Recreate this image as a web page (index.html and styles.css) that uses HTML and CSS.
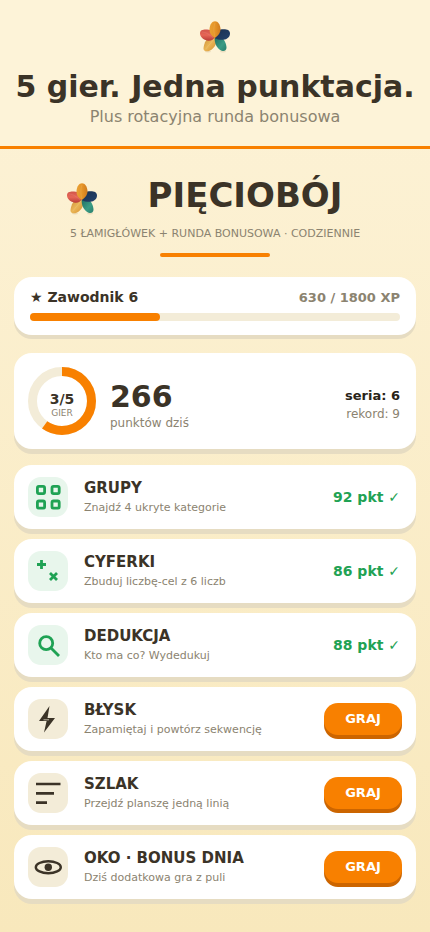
FILE: index.html
```html
<!DOCTYPE html>
<html lang="pl">
<head>
<meta charset="utf-8">
<meta name="viewport" content="width=device-width, initial-scale=1">
<title>Pięciobój</title>
<link rel="stylesheet" href="styles.css">
</head>
<body>
<svg class="defs" aria-hidden="true">
  <defs>
    <linearGradient id="amber" x1="0" x2="1"><stop offset="0" stop-color="#e8a034"/><stop offset=".5" stop-color="#e69528"/><stop offset="1" stop-color="#cf7a1e"/></linearGradient>
    <linearGradient id="navy" x1="0" y1="0" x2="1" y2="1"><stop offset="0" stop-color="#1b3050"/><stop offset="1" stop-color="#23426c"/></linearGradient>
    <linearGradient id="teal" x1="0" y1="0" x2="1" y2="1"><stop offset="0" stop-color="#1f6c62"/><stop offset=".6" stop-color="#3b9c85"/><stop offset="1" stop-color="#287e6c"/></linearGradient>
    <linearGradient id="gold" x1="0" y1="0" x2="1" y2="1"><stop offset="0" stop-color="#c78832"/><stop offset=".5" stop-color="#eab657"/><stop offset="1" stop-color="#d58d2e"/></linearGradient>
    <linearGradient id="coral" x1="0" y1="0" x2="0" y2="1"><stop offset="0" stop-color="#d2554a"/><stop offset=".5" stop-color="#e66656"/><stop offset="1" stop-color="#b93d37"/></linearGradient>
    <symbol id="logo" viewBox="0 0 32 32">
      <ellipse cx="9" cy="30.500" rx="3" ry="1" fill="#8b6b3a" opacity=".15"/>
      <ellipse cx="24" cy="30.500" rx="3" ry="1" fill="#8b6b3a" opacity=".15"/>
      <path d="M16.500 15L8 18.500C6 20 4.500 25 4.500 28C5 30.500 8 31 11 29.500C15 27.500 18 23 17.500 18Z" fill="url(#gold)"/>
      <path d="M16 15.500L23 17C26 19 27.500 24 27.500 27C27 30.500 24 31 20.500 28.500C16.500 25.500 15 20 16 15.500Z" fill="url(#teal)"/>
      <path d="M15.500 17C15.500 11.500 18.500 8.500 23 8.300C27 8 31 8.500 31 12.500C31 16 28 18.500 24.500 18.800C21 19 18 18.500 15.500 17Z" fill="url(#navy)"/>
      <path d="M16 16C14.500 19 11.500 20.300 8 19.500C4 18.500 1 15.500 1 12.500C1 9 4 8.300 8 8.500C13 8.500 16 11.500 16 16Z" fill="url(#coral)"/>
      <path d="M15.800 17C12 15 10.300 12 10.500 8C10.800 3.500 13 .2 16 .2C19 .2 21.200 3.500 21.500 8C21.500 12 19.500 14 15.800 17Z" fill="url(#amber)"/>
      <path d="M16 2C14 8 15 12 16 16M7 28C9 25 12 22 15 18M3 11C7 11 11 14 14 17" fill="none" stroke="#fff" stroke-width=".6" opacity=".15"/>
    </symbol>
  </defs>
</svg>
<header class="banner">
  <svg class="logo" aria-hidden="true"><use href="#logo"/></svg>
  <p class="slogan">5 gier. Jedna punktacja.</p>
  <p class="tagline">Plus rotacyjna runda bonusowa</p>
</header>
<main class="page">
  <div class="brand">
    <svg class="logo" aria-hidden="true"><use href="#logo"/></svg>
    <h1 class="name">PIĘCIOBÓJ</h1>
  </div>
  <p class="intro">5 ŁAMIGŁÓWEK + RUNDA BONUSOWA · CODZIENNIE</p>
  <div class="rule"></div>

  <section class="card level">
    <div class="level-row">
      <span class="rank">★ Zawodnik 6</span>
      <span class="xp">630 / 1800 XP</span>
    </div>
    <div class="track"><div class="fill" style="width:35%"></div></div>
  </section>

  <section class="card today">
    <div class="ring">
      <svg class="ring-art" viewBox="0 0 68 68" aria-hidden="true">
        <circle class="ring-base" cx="34" cy="34" r="29.500"/>
        <circle class="ring-done" cx="34" cy="34" r="29.500" pathLength="100" stroke-dasharray="60 40" transform="rotate(-90 34 34)"/>
      </svg>
      <div class="ring-text"><span class="ring-count">3/5</span><span class="ring-unit">GIER</span></div>
    </div>
    <div class="score">
      <span class="points">266</span>
      <span class="points-label">punktów dziś</span>
    </div>
    <div class="streak">
      <span class="series">seria: 6</span>
      <span class="record">rekord: 9</span>
    </div>
  </section>

  <section class="games">
    <article class="card game">
      <div class="icon done"><svg viewBox="0 0 40 40" aria-hidden="true"><g fill="none" stroke="currentColor" stroke-width="2.800"><rect x="9.400" y="9.400" width="7.200" height="7.200" rx="1.500"/><rect x="24" y="9.400" width="7.200" height="7.200" rx="1.500"/><rect x="9.400" y="24" width="7.200" height="7.200" rx="1.500"/><rect x="24" y="24" width="7.200" height="7.200" rx="1.500"/></g></svg></div>
      <div class="info"><h2 class="title">GRUPY</h2><p class="desc">Znajdź 4 ukryte kategorie</p></div>
      <span class="result">92 pkt ✓</span>
    </article>
    <article class="card game">
      <div class="icon done"><svg viewBox="0 0 40 40" aria-hidden="true"><path d="M9 13.500h9M13.500 9v9M22 22l7 7M29 22l-7 7" fill="none" stroke="currentColor" stroke-width="2.800"/></svg></div>
      <div class="info"><h2 class="title">CYFERKI</h2><p class="desc">Zbuduj liczbę-cel z 6 liczb</p></div>
      <span class="result">86 pkt ✓</span>
    </article>
    <article class="card game">
      <div class="icon done"><svg viewBox="0 0 40 40" aria-hidden="true"><g fill="none" stroke="currentColor" stroke-width="2.800"><circle cx="18.200" cy="18.200" r="6.500"/><path d="M23 23l8 8"/></g></svg></div>
      <div class="info"><h2 class="title">DEDUKCJA</h2><p class="desc">Kto ma co? Wydedukuj</p></div>
      <span class="result">88 pkt ✓</span>
    </article>
    <article class="card game">
      <div class="icon"><svg viewBox="0 0 40 40" aria-hidden="true"><path d="M21.500 7L11 22h7.600L16 33.500 27 19h-7.500Z" fill="currentColor"/><path d="M15.500 20.800h5.500" stroke="#f3ecd8" stroke-width=".7"/></svg></div>
      <div class="info"><h2 class="title">BŁYSK</h2><p class="desc">Zapamiętaj i powtórz sekwencję</p></div>
      <button class="play" type="button">GRAJ</button>
    </article>
    <article class="card game">
      <div class="icon"><svg viewBox="0 0 40 40" aria-hidden="true"><path d="M8 11h24.500M8 20.400h18M8 29.600h11" fill="none" stroke="currentColor" stroke-width="2.600"/></svg></div>
      <div class="info"><h2 class="title">SZLAK</h2><p class="desc">Przejdź planszę jedną linią</p></div>
      <button class="play" type="button">GRAJ</button>
    </article>
    <article class="card game">
      <div class="icon"><svg viewBox="0 0 40 40" aria-hidden="true"><ellipse cx="20.300" cy="20.200" rx="12.500" ry="6" fill="none" stroke="currentColor" stroke-width="2.400"/><circle cx="20.300" cy="20.200" r="3.700" fill="currentColor"/></svg></div>
      <div class="info"><h2 class="title">OKO · BONUS DNIA</h2><p class="desc">Dziś dodatkowa gra z puli</p></div>
      <button class="play" type="button">GRAJ</button>
    </article>
  </section>
</main>
</body>
</html>
```
FILE: styles.css
```css
:root {
  --ink: #3b3327;
  --muted: #8b8370;
  --orange: #f88000;
  --green: #1fa254;
  --sand: #f3ecd8;
  --edge: #e6dcc2;
}

* { box-sizing: border-box; }

body {
  margin: 0;
  min-height: 100vh;
  background: linear-gradient(#fdf3d8, #f8e8bc);
  color: var(--ink);
  font-family: "DejaVu Sans", sans-serif;
}

h1, h2, p { margin: 0; }

.defs { position: absolute; width: 0; height: 0; }

.logo { display: block; width: 32px; height: 32px; flex: none; }

.banner {
  display: flex;
  flex-direction: column;
  align-items: center;
  padding: 21px 8px 17px;
  background: #fdf3d8;
  border-bottom: 3px solid var(--orange);
  text-align: center;
}

.slogan {
  margin-top: 16px;
  font-size: 30px;
  line-height: 36px;
  font-weight: 700;
}

.tagline { font-size: 16px; line-height: 24px; color: var(--muted); }

.page { padding: 26px 14px 32px; }

.brand {
  display: flex;
  align-items: center;
  justify-content: center;
  gap: 50px;
  padding-right: 22px;
}

.brand .logo { margin-top: 8px; }

.name { font-size: 34px; line-height: 40px; font-weight: 700; }

.intro {
  margin-top: 11px;
  text-align: center;
  font-size: 11px;
  line-height: 16px;
  color: var(--muted);
}

.rule {
  width: 110px;
  height: 4px;
  margin: 11px auto 20px;
  border-radius: 2px;
  background: var(--orange);
}

.card {
  background: #fff;
  border-radius: 18px;
  box-shadow: 0 5px 0 var(--edge);
}

.level {
  padding: 11px 16px 14px;
  box-shadow: 0 4px 0 var(--edge);
}

.level-row {
  display: flex;
  justify-content: space-between;
  line-height: 18px;
  font-weight: 700;
}

.rank { font-size: 14px; }
.xp { font-size: 13px; line-height: 20px; color: var(--muted); }

.track {
  height: 8px;
  margin-top: 5px;
  border-radius: 4px;
  background: var(--sand);
}

.fill { height: 100%; border-radius: 4px; background: var(--orange); }

.today {
  display: flex;
  align-items: center;
  gap: 14px;
  margin: 18px 0 16px;
  padding: 14px 16px 14px 14px;
}

.ring { display: grid; place-items: center; width: 68px; height: 68px; }
.ring > * { grid-area: 1 / 1; }
.ring-art { width: 68px; height: 68px; }
.ring-art circle { fill: none; stroke-width: 9; }
.ring-base { stroke: var(--sand); }
.ring-done { stroke: var(--orange); }
.ring-text, .score, .streak { display: flex; flex-direction: column; padding-top: 8px; }
.score { padding-top: 7px; }
.ring-text { align-items: center; }
.ring-count { font-size: 14px; line-height: 16px; font-weight: 700; }
.ring-unit { font-size: 9px; line-height: 12px; color: var(--muted); }

.points { font-size: 30px; line-height: 36px; font-weight: 700; }
.points-label { font-size: 12px; line-height: 16px; color: var(--muted); }

.streak { margin-left: auto; align-items: flex-end; line-height: 19px; }
.series { font-size: 13px; font-weight: 700; color: #292418; }
.record { font-size: 12px; color: var(--muted); }

.games { display: flex; flex-direction: column; gap: 10px; }

.game {
  display: flex;
  align-items: center;
  gap: 16px;
  padding: 12px 14px;
}

.icon {
  flex: none;
  width: 40px;
  height: 40px;
  border-radius: 13px;
  background: var(--sand);
}

.icon svg { display: block; width: 100%; height: 100%; }
.icon.done { background: #e8f6ec; color: var(--green); }

.info { flex: 1; min-width: 0; padding-top: 2px; }
.title { font-size: 15px; line-height: 19px; font-weight: 700; }
.desc { font-size: 11px; line-height: 19px; color: var(--muted); }

.result { font-size: 14px; font-weight: 700; color: var(--green); }
.game .result { padding-right: 2px; }

.play {
  width: 78px;
  height: 32px;
  padding: 0;
  border: 0;
  border-radius: 14px;
  background: var(--orange);
  box-shadow: 0 4px 0 #cc6500;
  color: #fff;
  font: 700 13px/32px "DejaVu Sans", sans-serif;
}
```
